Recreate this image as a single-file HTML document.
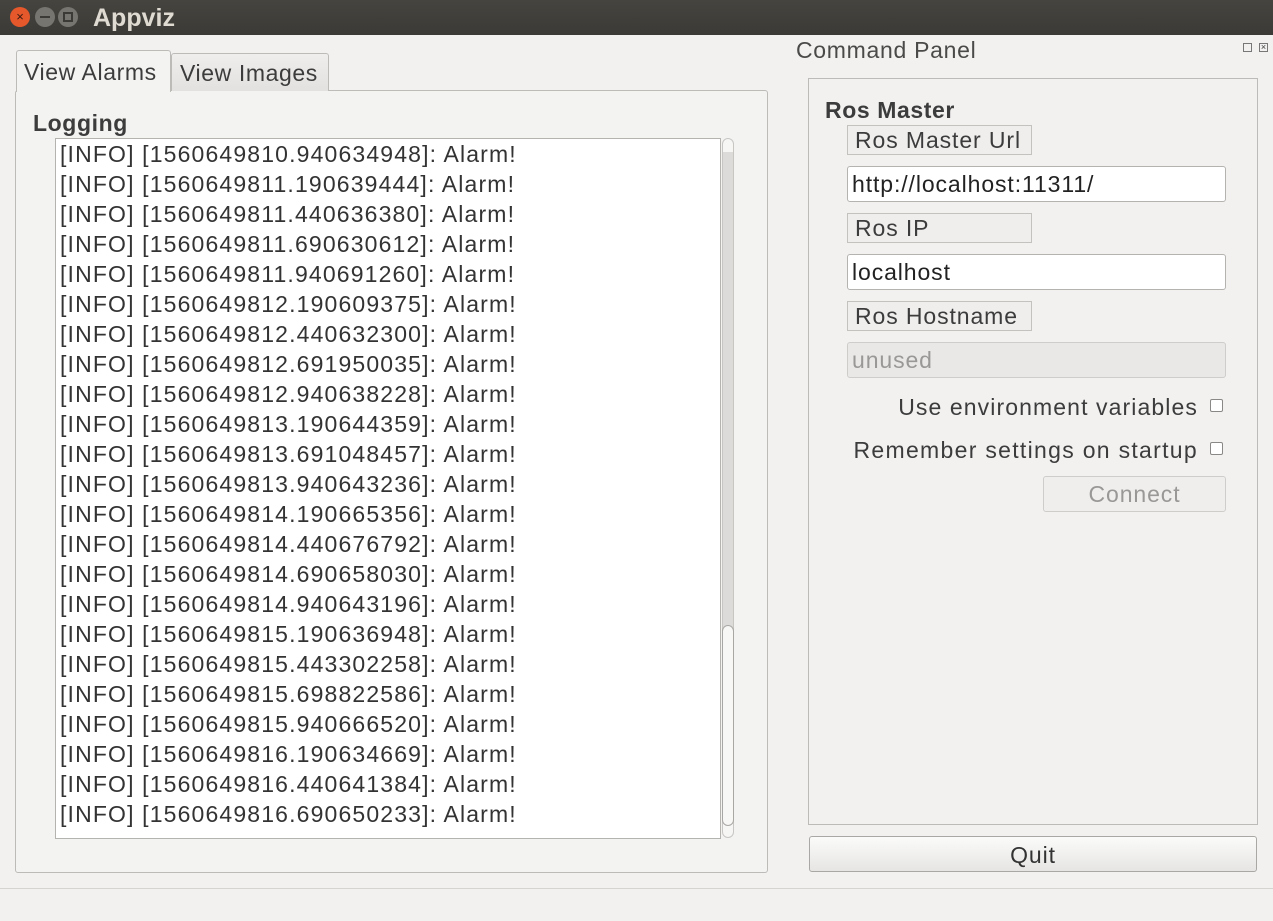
<!DOCTYPE html>
<html><head><meta charset="utf-8"><style>
*{box-sizing:border-box;margin:0;padding:0}
body{width:1273px;height:921px;background:#f2f1f0;font-family:"Liberation Sans",sans-serif;color:#3c3c3c;position:relative;overflow:hidden;letter-spacing:0.9px}
.a{position:absolute}
.title{left:0;top:0;width:1273px;height:35px;background:linear-gradient(#46443f,#3b3a36);letter-spacing:0}
.btn{width:20px;height:20px;border-radius:50%;top:7px}
.lbl{border:1px solid #c4c2bf;background:#efeeed;font-size:23px;padding-left:7px;line-height:28px;height:30px}
.inp{border:1px solid #b5b3b0;border-radius:3px;background:#fff;font-size:23px;padding-left:4px;line-height:34px;height:36px;color:#222}
.log div{height:30px;line-height:29px;font-size:23px;letter-spacing:1.15px;color:#333;white-space:nowrap}
.cb{width:13px;height:13px;border:1px solid #8a8886;border-radius:2px;background:#fff}
</style></head><body>
<div class="a title">
 <div class="a btn" style="left:10px;background:#e5582b;color:#3a1a10;font-size:13px;text-align:center;line-height:20px">×</div>
 <div class="a btn" style="left:35px;background:#77756f"><div class="a" style="left:5px;top:9px;width:10px;height:2px;background:#3b3a36"></div></div>
 <div class="a btn" style="left:58px;background:#77756f"><div class="a" style="left:5px;top:5px;width:10px;height:10px;border:2px solid #3b3a36"></div></div>
 <div class="a" style="left:93px;top:3px;font-size:25px;font-weight:bold;color:#dfdbd2;line-height:30px">Appviz</div>
</div>
<div class="a" style="left:15px;top:90px;width:753px;height:783px;border:1px solid #bdbbb8;border-radius:3px;background:#f3f3f2"></div>
<div class="a" style="left:171px;top:53px;width:158px;height:38px;border:1px solid #bdbbb8;border-bottom:none;border-radius:3px 3px 0 0;background:linear-gradient(#efeeed,#e3e1df);font-size:23px;line-height:38px;padding-left:8px;letter-spacing:0.6px">View Images</div>
<div class="a" style="left:16px;top:50px;width:155px;height:42px;border:1px solid #bdbbb8;border-bottom:none;border-radius:3px 3px 0 0;background:#f3f3f2;font-size:23px;line-height:42px;padding-left:7px;letter-spacing:0.6px">View Alarms</div>
<div class="a" style="left:33px;top:108px;font-size:23px;font-weight:bold;line-height:30px;letter-spacing:0.6px">Logging</div>
<div class="a" style="left:55px;top:138px;width:666px;height:701px;border:1px solid #b5b3b0;background:#fff;overflow:hidden">
<div class="log" style="position:absolute;left:4px;top:1px">
<div>[INFO] [1560649810.940634948]: Alarm!</div>
<div>[INFO] [1560649811.190639444]: Alarm!</div>
<div>[INFO] [1560649811.440636380]: Alarm!</div>
<div>[INFO] [1560649811.690630612]: Alarm!</div>
<div>[INFO] [1560649811.940691260]: Alarm!</div>
<div>[INFO] [1560649812.190609375]: Alarm!</div>
<div>[INFO] [1560649812.440632300]: Alarm!</div>
<div>[INFO] [1560649812.691950035]: Alarm!</div>
<div>[INFO] [1560649812.940638228]: Alarm!</div>
<div>[INFO] [1560649813.190644359]: Alarm!</div>
<div>[INFO] [1560649813.691048457]: Alarm!</div>
<div>[INFO] [1560649813.940643236]: Alarm!</div>
<div>[INFO] [1560649814.190665356]: Alarm!</div>
<div>[INFO] [1560649814.440676792]: Alarm!</div>
<div>[INFO] [1560649814.690658030]: Alarm!</div>
<div>[INFO] [1560649814.940643196]: Alarm!</div>
<div>[INFO] [1560649815.190636948]: Alarm!</div>
<div>[INFO] [1560649815.443302258]: Alarm!</div>
<div>[INFO] [1560649815.698822586]: Alarm!</div>
<div>[INFO] [1560649815.940666520]: Alarm!</div>
<div>[INFO] [1560649816.190634669]: Alarm!</div>
<div>[INFO] [1560649816.440641384]: Alarm!</div>
<div>[INFO] [1560649816.690650233]: Alarm!</div>
</div></div>
<div class="a" style="left:722px;top:138px;width:12px;height:700px;border:1px solid #c8c6c3;border-radius:6px;background:#f6f6f5"></div>
<div class="a" style="left:723px;top:152px;width:10px;height:475px;background:#dcdbd9"></div>
<div class="a" style="left:722px;top:625px;width:12px;height:201px;border:1px solid #a9a7a4;border-radius:6px;background:#f7f7f6"></div>
<div class="a" style="left:796px;top:35px;font-size:23px;line-height:30px;color:#4a4a48;letter-spacing:0.7px">Command Panel</div>
<div class="a" style="left:1243px;top:43px;width:9px;height:9px;border:1px solid #777"></div>
<div class="a" style="left:1259px;top:43px;width:9px;height:9px;border:1px solid #777;font-size:9px;line-height:7px;text-align:center;letter-spacing:0">×</div>
<div class="a" style="left:808px;top:78px;width:450px;height:747px;border:1px solid #bdbbb8"></div>
<div class="a" style="left:825px;top:95px;font-size:23px;font-weight:bold;line-height:30px;letter-spacing:0.6px">Ros Master</div>
<div class="a lbl" style="left:847px;top:125px;width:185px">Ros Master Url</div>
<div class="a inp" style="left:847px;top:166px;width:379px">http://localhost:11311/</div>
<div class="a lbl" style="left:847px;top:213px;width:185px">Ros IP</div>
<div class="a inp" style="left:847px;top:254px;width:379px">localhost</div>
<div class="a lbl" style="left:847px;top:301px;width:185px">Ros Hostname</div>
<div class="a inp" style="left:847px;top:342px;width:379px;background:#e9e8e6;border-color:#cfcdca;color:#9a9896">unused</div>
<div class="a" style="right:75px;top:392px;font-size:23px;line-height:30px;letter-spacing:1.1px">Use environment variables</div>
<div class="a cb" style="left:1210px;top:399px"></div>
<div class="a" style="right:75px;top:435px;font-size:23px;line-height:30px;letter-spacing:1.3px">Remember settings on startup</div>
<div class="a cb" style="left:1210px;top:442px"></div>
<div class="a" style="left:1043px;top:476px;width:183px;height:36px;border:1px solid #cfcdca;border-radius:3px;background:#efeeed;font-size:23px;line-height:34px;text-align:center;color:#9a9896">Connect</div>
<div class="a" style="left:809px;top:836px;width:448px;height:36px;border:1px solid #aaa8a5;border-radius:3px;background:linear-gradient(#fbfbfa,#e6e5e3);font-size:23px;line-height:36px;text-align:center;color:#333">Quit</div>
<div class="a" style="left:0;top:888px;width:1273px;height:1px;background:#d6d4d1"></div>
</body></html>
